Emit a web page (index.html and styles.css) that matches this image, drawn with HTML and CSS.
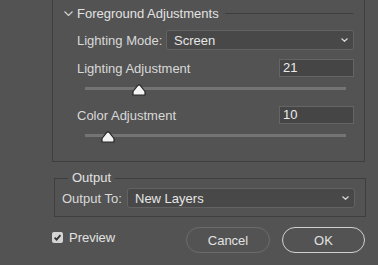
FILE: index.html
```html
<!DOCTYPE html>
<html lang="en">
<head>
    <meta charset="UTF-8">
    <meta name="viewport" content="width=device-width, initial-scale=1.0">
    <title>Foreground Adjustments</title>
    <link rel="stylesheet" href="styles.css">
</head>
<body>
    <div class="panel">
        <div class="group-head">
            <svg class="chevron" width="9" height="5" viewBox="0 0 9 5"><path d="M0.5 0.5 L4.5 4.5 L8.5 0.5" fill="none" stroke="#cfcfcf" stroke-width="1.2"/></svg>
            <span>Foreground Adjustments</span>
            <div class="rule"></div>
        </div>

        <div class="row mode-row">
            <label>Lighting Mode:</label>
            <div class="select mode-select">
                <span>Screen</span>
                <svg width="7" height="4" viewBox="0 0 7 4"><path d="M0.5 0.5 L3.5 3.3 L6.5 0.5" fill="none" stroke="#d8d8d8" stroke-width="1.2"/></svg>
            </div>
        </div>

        <div class="row adj-row">
            <label>Lighting Adjustment</label>
            <div class="num">21</div>
        </div>
        <div class="slider">
            <div class="track"></div>
            <svg class="thumb" style="left: 47px" width="14" height="12" viewBox="0 0 14 12"><path d="M1 11 L1 7.5 L5.6 1.6 Q7 0.2 8.4 1.6 L13 7.5 L13 11 Z" fill="#f4f4f4" stroke="#262626" stroke-width="1.2" stroke-linejoin="round"/></svg>
        </div>

        <div class="row adj-row">
            <label>Color Adjustment</label>
            <div class="num">10</div>
        </div>
        <div class="slider">
            <div class="track"></div>
            <svg class="thumb" style="left: 16px" width="14" height="12" viewBox="0 0 14 12"><path d="M1 11 L1 7.5 L5.6 1.6 Q7 0.2 8.4 1.6 L13 7.5 L13 11 Z" fill="#f4f4f4" stroke="#262626" stroke-width="1.2" stroke-linejoin="round"/></svg>
        </div>
    </div>

    <fieldset class="output">
        <legend>Output</legend>
        <div class="row out-row">
            <label>Output To:</label>
            <div class="select out-select">
                <span>New Layers</span>
                <svg width="7" height="4" viewBox="0 0 7 4"><path d="M0.5 0.5 L3.5 3.3 L6.5 0.5" fill="none" stroke="#d8d8d8" stroke-width="1.2"/></svg>
            </div>
        </div>
    </fieldset>

    <div class="footer">
        <div class="preview">
            <span class="check">
                <svg width="11" height="11" viewBox="0 0 11 11"><path d="M2.6 5.6 L4.6 7.6 L8.4 3.2" fill="none" stroke="#333" stroke-width="1.8"/></svg>
            </span>
            <span>Preview</span>
        </div>
        <button class="btn cancel">Cancel</button>
        <button class="btn ok">OK</button>
    </div>
</body>
</html>
```

FILE: styles.css
```css
body {
    margin: 0;
    background-color: #535353;
    font-family: "Liberation Sans", Arial, sans-serif;
    font-size: 13px;
    color: #d9d9d9;
}
.panel {
    box-sizing: border-box;
    width: 313px;
    height: 162px;
    margin-left: 52px;
    border: 1px solid #3e3e3e;
    border-top: none;
}
.group-head {
    display: flex;
    align-items: center;
    height: 26px;
    padding: 0 11px;
    color: #e2e2e2;
}
.chevron {
    margin-right: 4px;
}
.rule {
    flex: 1;
    height: 1px;
    margin-left: 6px;
    background-color: #3e3e3e;
}
.row {
    display: flex;
    align-items: center;
}
.mode-row {
    margin-top: 4px;
    padding-left: 24px;
    height: 20px;
}
.select {
    box-sizing: border-box;
    display: flex;
    align-items: center;
    justify-content: space-between;
    height: 20px;
    padding: 0 5px 0 7px;
    background-color: #484848;
    border: 1px solid #626262;
    border-radius: 3px;
    color: #e6e6e6;
}
.mode-select {
    width: 188px;
    margin-left: auto;
    margin-right: 10px;
}
.adj-row {
    margin-top: 9px;
    height: 18px;
    padding-left: 24px;
    padding-right: 10px;
}
.num {
    box-sizing: border-box;
    width: 75px;
    height: 18px;
    margin-left: auto;
    padding-left: 3px;
    line-height: 16px;
    background-color: #454545;
    border: 1px solid #656565;
    color: #ececec;
}
.slider {
    position: relative;
    height: 20px;
    margin-left: 32px;
    width: 261px;
}
.track {
    position: relative;
    top: 10px;
    height: 3px;
    background-color: #747474;
}
.thumb {
    position: absolute;
    top: 7px;
}
.output {
    box-sizing: border-box;
    width: 312px;
    margin: 8px 0 0 54px;
    padding: 2px 10px 8px 7px;
    border: 1px solid #3e3e3e;
}
.output legend {
    margin-left: 6px;
    padding: 0 4px;
    line-height: 16px;
    color: #e2e2e2;
}
.out-row {
    height: 20px;
}
.out-select {
    width: 228px;
    margin-left: auto;
}
.footer {
    display: flex;
    align-items: center;
    margin-top: 10px;
    padding: 0 13px 0 52px;
}
.preview {
    display: flex;
    align-items: center;
    align-self: flex-start;
    margin-top: 3px;
    color: #e2e2e2;
}
.check {
    display: flex;
    width: 11px;
    height: 11px;
    margin-right: 6px;
    background-color: #d4d4d4;
    border-radius: 2px;
}
.btn {
    box-sizing: border-box;
    height: 26px;
    border-radius: 13px;
    background: none;
    font-family: inherit;
    font-size: 13px;
    color: #e2e2e2;
    cursor: pointer;
}
.cancel {
    width: 84px;
    margin-left: auto;
    border: 1px solid #6c6c6c;
}
.ok {
    width: 83px;
    margin-left: 12px;
    border: 1.5px solid #d2d2d2;
}
```
